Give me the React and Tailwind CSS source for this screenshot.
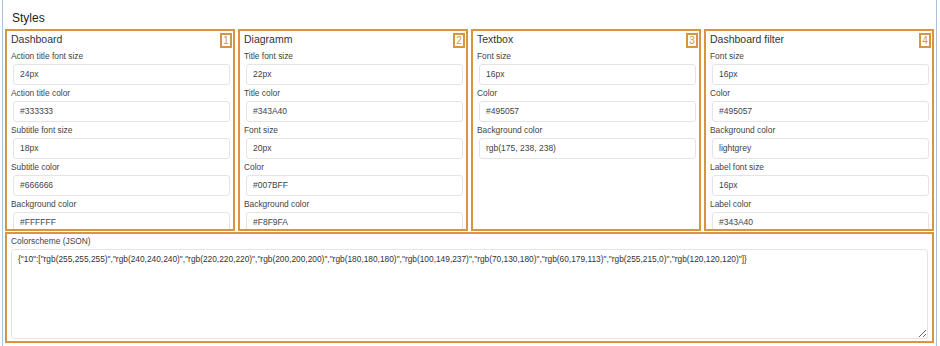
import React from 'react';

const panels = [
  {
    id: 1,
    title: 'Dashboard',
    fields: [
      { label: 'Action title font size', value: '24px' },
      { label: 'Action title color', value: '#333333' },
      { label: 'Subtitle font size', value: '18px' },
      { label: 'Subtitle color', value: '#666666' },
      { label: 'Background color', value: '#FFFFFF' },
    ],
  },
  {
    id: 2,
    title: 'Diagramm',
    fields: [
      { label: 'Title font size', value: '22px' },
      { label: 'Title color', value: '#343A40' },
      { label: 'Font size', value: '20px' },
      { label: 'Color', value: '#007BFF' },
      { label: 'Background color', value: '#F8F9FA' },
    ],
  },
  {
    id: 3,
    title: 'Textbox',
    fields: [
      { label: 'Font size', value: '16px' },
      { label: 'Color', value: '#495057' },
      { label: 'Background color', value: 'rgb(175, 238, 238)' },
    ],
  },
  {
    id: 4,
    title: 'Dashboard filter',
    fields: [
      { label: 'Font size', value: '16px' },
      { label: 'Color', value: '#495057' },
      { label: 'Background color', value: 'lightgrey' },
      { label: 'Label font size', value: '16px' },
      { label: 'Label color', value: '#343A40' },
    ],
  },
];

const colorscheme =
  '{"10":["rgb(255,255,255)","rgb(240,240,240)","rgb(220,220,220)","rgb(200,200,200)","rgb(180,180,180)","rgb(100,149,237)","rgb(70,130,180)","rgb(60,179,113)","rgb(255,215,0)","rgb(120,120,120)"]}';

const Panel = ({ panel }) => (
  <div className="flex-1 h-[202px] overflow-hidden border-2 border-[#d5963f] pl-[4px] pr-[1px] flex flex-col">
    {/* Heading row with number badge */}
    <div className="h-[17px] shrink-0 flex justify-between items-start">
      <span className="text-[10.5px] leading-[14px] pt-[1px] text-[#333]">{panel.title}</span>
      <span className="mt-[2px] w-[12px] h-[15px] border-2 border-[#d5963f] text-[#d5963f] text-[10px] leading-[11px] flex items-center justify-center">
        {panel.id}
      </span>
    </div>
    {panel.fields.map((f) => (
      <div key={f.label} className="shrink-0">
        <div className="h-[16px] text-[8.4px] leading-[16px] text-[#444]">{f.label}</div>
        <div className="ml-[2px] mr-[2px] h-[21px] border border-[#e4e4e4] rounded-[3px] bg-white pl-[6px] text-[8.5px] leading-[19px] text-[#3d4349]">
          {f.value}
        </div>
      </div>
    ))}
  </div>
);

export default function App() {
  return (
    <div className="w-[940px] h-[346px] bg-white overflow-hidden" style={{ fontFamily: '"Liberation Sans", Arial, sans-serif' }}>
      <div className="ml-[2px] w-[935px] h-full border-x border-[#a9c3df] px-[2px]">
        <div className="h-[29px] pt-[11px] pl-[7px] text-[12px] leading-[14px] text-[#222]">Styles</div>

        <div className="flex gap-[3px]">
          {panels.map((p) => (
            <Panel key={p.id} panel={p} />
          ))}
        </div>

        <div className="mt-[1px] h-[111px] border-2 border-[#d5963f] px-[4px] flex flex-col">
          <div className="h-[15px] text-[8.4px] leading-[14px] text-[#444]">Colorscheme (JSON)</div>
          <textarea
            readOnly
            value={colorscheme}
            className="h-[90px] w-full border border-[#e4e4e4] rounded-[3px] bg-white pl-[6px] pt-[4px] text-[8.35px] leading-[11px] text-[#333] outline-none"
            style={{ fontFamily: '"Liberation Sans", Arial, sans-serif' }}
          />
        </div>
      </div>
    </div>
  );
}
